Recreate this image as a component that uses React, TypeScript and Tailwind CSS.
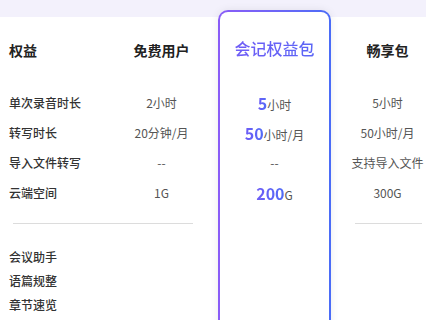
import React from "react";

const font = { fontFamily: '"Noto Sans CJK SC", "Noto Sans", sans-serif' };

const rows = [
    { label: "单次录音时长", free: "2小时", vipNum: "5", vipUnit: "小时", plus: "5小时" },
    { label: "转写时长", free: "20分钟/月", vipNum: "50", vipUnit: "小时/月", plus: "50小时/月" },
    { label: "导入文件转写", free: "--", vipNum: "", vipUnit: "--", plus: "支持导入文件" },
    { label: "云端空间", free: "1G", vipNum: "200", vipUnit: "G", plus: "300G" },
];

const extras = ["会议助手", "语篇规整", "章节速览"];

const App: React.FC = () => {
    return (
        <div style={font} className="w-[426px] h-[320px] overflow-hidden bg-[#f3f1fc]">
            <div className="mt-[17px] h-[303px] bg-white flex items-start">

                {/* left: labels + free plan */}
                <div className="w-[218px] shrink-0 flex flex-col">
                    <div className="h-[66px] flex items-center">
                        <div className="w-[105px] pl-[9px] text-[14px] font-bold text-[#222]">权益</div>
                        <div className="w-[113px] text-center text-[14px] font-bold text-[#222]">免费用户</div>
                    </div>
                    <div className="pt-[5px]">
                        {rows.map((r) => (
                            <div key={r.label} className="h-[30px] flex items-center">
                                <div className="w-[105px] pl-[9px] text-[12px] font-medium text-[#333]">{r.label}</div>
                                <div className="w-[113px] text-center text-[12px] text-[#555]">{r.free}</div>
                            </div>
                        ))}
                    </div>
                    <div className="mt-[15px] ml-[13px] mr-[25px] h-px bg-[#dcdcdc]" />
                    <div className="pt-[21px]">
                        {extras.map((e) => (
                            <div key={e} className="h-[24px] flex items-center pl-[9px] text-[12px] font-medium text-[#333]">{e}</div>
                        ))}
                    </div>
                </div>

                {/* highlighted plan */}
                <div className="w-[113px] shrink-0 -mt-[7px] h-[340px] rounded-[10px] p-[2px] bg-gradient-to-r from-[#8a5cf7] to-[#4a6cf7] shadow-[0_0_8px_rgba(0,0,0,0.08)]">
                    <div className="h-full rounded-[8px] bg-white flex flex-col">
                        <div className="h-[71px] flex items-center justify-center">
                            <span className="text-[16px] font-medium bg-gradient-to-r from-[#6f5cf6] to-[#5a66f6] bg-clip-text text-transparent">会记权益包</span>
                        </div>
                        <div className="pt-[5px]">
                            {rows.map((r) => (
                                <div key={r.label} className="h-[30px] flex items-center justify-center">
                                    <span className="flex items-baseline">
                                        {r.vipNum && (
                                            <span className="text-[16px] font-bold bg-gradient-to-r from-[#6e5cf6] to-[#4f6cf7] bg-clip-text text-transparent">{r.vipNum}</span>
                                        )}
                                        <span className="text-[12px] text-[#555]">{r.vipUnit}</span>
                                    </span>
                                </div>
                            ))}
                        </div>
                    </div>
                </div>

                {/* plus plan */}
                <div className="w-[113px] shrink-0 flex flex-col">
                    <div className="h-[66px] flex items-center justify-center text-[14px] font-bold text-[#222]">畅享包</div>
                    <div className="pt-[5px]">
                        {rows.map((r) => (
                            <div key={r.label} className="h-[30px] flex items-center justify-center text-[12px] text-[#555] whitespace-nowrap">{r.plus}</div>
                        ))}
                    </div>
                    <div className="mt-[15px] ml-[24px] mr-[22px] h-px bg-[#dcdcdc]" />
                </div>
            </div>
        </div>
    );
};

export default App;
